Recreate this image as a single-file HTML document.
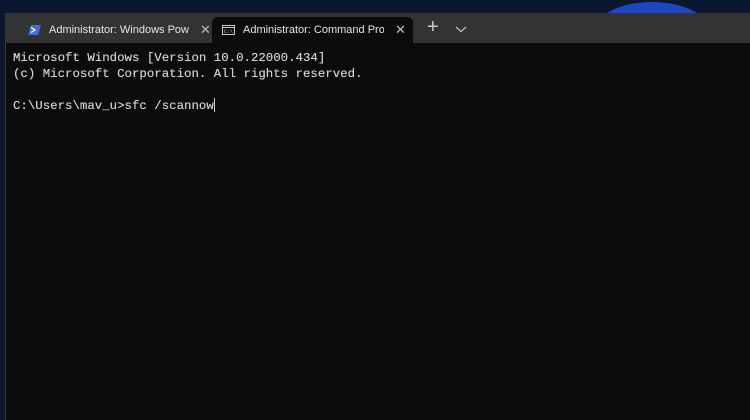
<!DOCTYPE html>
<html><head><style>
body{margin:0;width:750px;height:420px;overflow:hidden;background:#0b1730;position:relative;font-family:"Liberation Sans",sans-serif}
.arc{position:absolute;left:594px;top:2px;width:116px;height:60px;border-radius:50%;background:#1f48c0}
.win{position:absolute;left:5px;top:13px;width:745px;height:407px;background:#0c0c0c;border-left:1px solid #3a3a3a}
.bar{position:absolute;left:0;top:0;right:0;height:30px;background:#333333}
.tab{position:absolute;top:4px;height:26px;font-size:11px;color:#e6e6e6;line-height:26px}
.t1{left:6px;width:200px}
.t2{left:206px;width:201px;background:#0c0c0c;border-radius:6px 6px 0 0}
.x{position:absolute;top:0;font-size:13px;color:#bbb}
.term{position:absolute;left:7px;top:37px;font-family:"Liberation Mono",monospace;font-size:12.4px;line-height:16px;color:#d0d0d0;white-space:pre;text-shadow:0 0 0.4px #ccc}
.cur{display:inline-block;width:1px;height:14px;background:#ccc;vertical-align:-3px}
</style></head><body>
<div class="arc"></div>
<div class="win">
<div class="bar">
<div class="tab t1"><svg style="position:absolute;left:16px;top:8px" width="13" height="10"><polygon points="3,0 13,0 10,10 0,10" fill="#3d6fd8"/><path d="M3 2.5 L7 5 L3 7.5" stroke="#fff" stroke-width="1.2" fill="none"/></svg><span style="position:absolute;left:37px;width:140px;overflow:hidden;white-space:nowrap">Administrator: Windows PowerShell</span><span class="x" style="left:188px">✕</span></div>
<div class="tab t2"><svg style="position:absolute;left:10px;top:8px" width="13" height="10"><rect x="0.5" y="0.5" width="12" height="9" fill="none" stroke="#ccc"/><line x1="0" y1="2.5" x2="13" y2="2.5" stroke="#ccc"/><text x="2" y="8" font-size="5" fill="#ccc" font-family="Liberation Mono">C:\</text></svg><span style="position:absolute;left:31px;width:141px;overflow:hidden;white-space:nowrap">Administrator: Command Prompt</span><span class="x" style="left:183px">✕</span></div>
<div style="position:absolute;left:421px;top:3px;color:#ccc;font-size:20px;font-weight:300">+</div>
<svg style="position:absolute;left:449px;top:13px" width="12" height="7"><path d="M1 1 L6 5.5 L11 1" stroke="#bbb" stroke-width="1.3" fill="none"/></svg>
</div>
<div class="term">Microsoft Windows [Version 10.0.22000.434]
(c) Microsoft Corporation. All rights reserved.

C:\Users\mav_u&gt;sfc /scannow<span class="cur"></span></div>
</div>
</body></html>
